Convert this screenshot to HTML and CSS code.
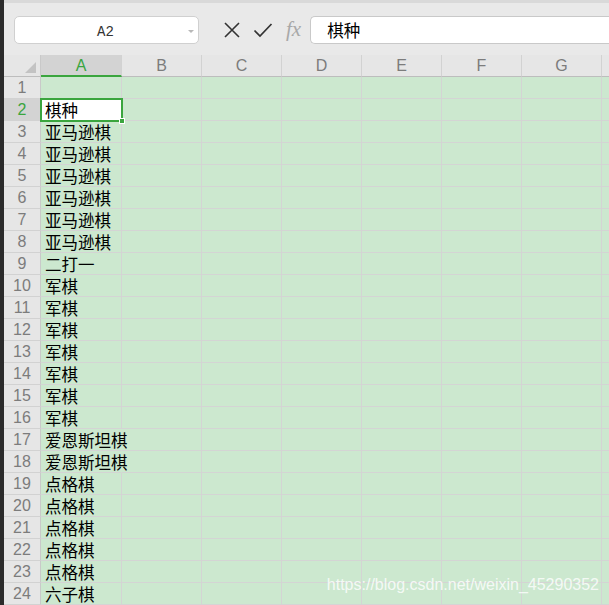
FILE: index.html
```html
<!DOCTYPE html>
<html lang="zh">
<head>
<meta charset="utf-8">
<link rel="stylesheet" href="styles.css">
</head>
<body>
<div class="app">
  <div class="strip"></div>
  <div class="main">
    <div class="toolbar">
      <div class="namebox"><span class="ref">A2</span><span class="caret"></span></div>
      <div class="fbtns">
        <svg class="ico" width="18" height="18" viewBox="0 0 18 18"><path d="M2 2 L16 16 M16 2 L2 16" stroke="#333" stroke-width="1.6" fill="none"/></svg>
        <svg class="ico" width="20" height="18" viewBox="0 0 20 18"><path d="M1.5 9.5 L7 15 L18.5 3" stroke="#333" stroke-width="1.7" fill="none"/></svg>
        <span class="fx">fx</span>
      </div>
      <div class="formula">棋种</div>
    </div>
    <div class="sheet">
      <div class="corner"><span class="tri"></span></div>
      <div class="ch sel">A</div><div class="ch">B</div><div class="ch">C</div><div class="ch">D</div><div class="ch">E</div><div class="ch">F</div><div class="ch">G</div><div class="ch"></div>

      <div class="rh">1</div><div class="c"></div><div class="c"></div><div class="c"></div><div class="c"></div><div class="c"></div><div class="c"></div><div class="c"></div><div class="c"></div>
      <div class="rh sel">2</div><div class="c active">棋种<span class="handle"></span></div><div class="c"></div><div class="c"></div><div class="c"></div><div class="c"></div><div class="c"></div><div class="c"></div><div class="c"></div>
      <div class="rh">3</div><div class="c">亚马逊棋</div><div class="c"></div><div class="c"></div><div class="c"></div><div class="c"></div><div class="c"></div><div class="c"></div><div class="c"></div>
      <div class="rh">4</div><div class="c">亚马逊棋</div><div class="c"></div><div class="c"></div><div class="c"></div><div class="c"></div><div class="c"></div><div class="c"></div><div class="c"></div>
      <div class="rh">5</div><div class="c">亚马逊棋</div><div class="c"></div><div class="c"></div><div class="c"></div><div class="c"></div><div class="c"></div><div class="c"></div><div class="c"></div>
      <div class="rh">6</div><div class="c">亚马逊棋</div><div class="c"></div><div class="c"></div><div class="c"></div><div class="c"></div><div class="c"></div><div class="c"></div><div class="c"></div>
      <div class="rh">7</div><div class="c">亚马逊棋</div><div class="c"></div><div class="c"></div><div class="c"></div><div class="c"></div><div class="c"></div><div class="c"></div><div class="c"></div>
      <div class="rh">8</div><div class="c">亚马逊棋</div><div class="c"></div><div class="c"></div><div class="c"></div><div class="c"></div><div class="c"></div><div class="c"></div><div class="c"></div>
      <div class="rh">9</div><div class="c">二打一</div><div class="c"></div><div class="c"></div><div class="c"></div><div class="c"></div><div class="c"></div><div class="c"></div><div class="c"></div>
      <div class="rh">10</div><div class="c">军棋</div><div class="c"></div><div class="c"></div><div class="c"></div><div class="c"></div><div class="c"></div><div class="c"></div><div class="c"></div>
      <div class="rh">11</div><div class="c">军棋</div><div class="c"></div><div class="c"></div><div class="c"></div><div class="c"></div><div class="c"></div><div class="c"></div><div class="c"></div>
      <div class="rh">12</div><div class="c">军棋</div><div class="c"></div><div class="c"></div><div class="c"></div><div class="c"></div><div class="c"></div><div class="c"></div><div class="c"></div>
      <div class="rh">13</div><div class="c">军棋</div><div class="c"></div><div class="c"></div><div class="c"></div><div class="c"></div><div class="c"></div><div class="c"></div><div class="c"></div>
      <div class="rh">14</div><div class="c">军棋</div><div class="c"></div><div class="c"></div><div class="c"></div><div class="c"></div><div class="c"></div><div class="c"></div><div class="c"></div>
      <div class="rh">15</div><div class="c">军棋</div><div class="c"></div><div class="c"></div><div class="c"></div><div class="c"></div><div class="c"></div><div class="c"></div><div class="c"></div>
      <div class="rh">16</div><div class="c">军棋</div><div class="c"></div><div class="c"></div><div class="c"></div><div class="c"></div><div class="c"></div><div class="c"></div><div class="c"></div>
      <div class="rh">17</div><div class="c spill">爱恩斯坦棋</div><div class="c"></div><div class="c"></div><div class="c"></div><div class="c"></div><div class="c"></div><div class="c"></div><div class="c"></div>
      <div class="rh">18</div><div class="c spill">爱恩斯坦棋</div><div class="c"></div><div class="c"></div><div class="c"></div><div class="c"></div><div class="c"></div><div class="c"></div><div class="c"></div>
      <div class="rh">19</div><div class="c">点格棋</div><div class="c"></div><div class="c"></div><div class="c"></div><div class="c"></div><div class="c"></div><div class="c"></div><div class="c"></div>
      <div class="rh">20</div><div class="c">点格棋</div><div class="c"></div><div class="c"></div><div class="c"></div><div class="c"></div><div class="c"></div><div class="c"></div><div class="c"></div>
      <div class="rh">21</div><div class="c">点格棋</div><div class="c"></div><div class="c"></div><div class="c"></div><div class="c"></div><div class="c"></div><div class="c"></div><div class="c"></div>
      <div class="rh">22</div><div class="c">点格棋</div><div class="c"></div><div class="c"></div><div class="c"></div><div class="c"></div><div class="c"></div><div class="c"></div><div class="c"></div>
      <div class="rh">23</div><div class="c">点格棋</div><div class="c"></div><div class="c"></div><div class="c"></div><div class="c"></div><div class="c"></div><div class="c"></div><div class="c"></div>
      <div class="rh">24</div><div class="c">六子棋</div><div class="c"></div><div class="c"></div><div class="c"></div><div class="c"></div><div class="c"></div><div class="c"></div><div class="c"></div>
    </div>
  </div>
</div>
<div class="watermark">https://blog.csdn.net/weixin_45290352</div>
</body>
</html>
```
FILE: styles.css
```css
* { box-sizing: border-box; }
html, body { margin: 0; padding: 0; }
body {
  width: 609px;
  height: 605px;
  overflow: hidden;
  position: relative;
  background: #e9e9e9;
  font-family: "Liberation Sans", Arial, sans-serif;
}
.app { display: flex; height: 605px; }
.strip { width: 4px; flex: none; background: #2b2b2b; }
.main { flex: 1; min-width: 0; overflow: hidden; }

.toolbar {
  height: 55px;
  display: flex;
  align-items: flex-start;
  padding: 13px 0 0 10px;
  background: #e9e9e9;
  border-top: 3px solid #d9d9d9;
}
.namebox {
  width: 185px;
  height: 28px;
  flex: none;
  background: #fff;
  border: 1px solid #d0d0d0;
  border-radius: 5px;
  display: flex;
  align-items: center;
  justify-content: center;
  position: relative;
}
.ref {
  font-family: "Liberation Mono", monospace;
  font-size: 14px;
  color: #333;
  margin-left: -2px;
  padding-top: 3px;
}
.caret {
  position: absolute;
  right: 4px;
  top: 13px;
  width: 0; height: 0;
  border-left: 3px solid transparent;
  border-right: 3px solid transparent;
  border-top: 3px solid #b8b8b8;
}
.fbtns {
  display: flex;
  align-items: center;
  height: 28px;
  margin-left: 24px;
  gap: 12px;
}
.ico { display: block; }
.fx {
  font-family: "Liberation Serif", serif;
  font-style: italic;
  font-size: 21px;
  color: #a8a8a8;
  margin-left: 1px;
  line-height: 28px;
  margin-top: -2px;
}
.formula {
  margin-left: 9px;
  flex: 1;
  height: 28px;
  background: #fff;
  border: 1px solid #c9c9c9;
  border-right: none;
  border-radius: 5px 0 0 5px;
  font-family: "Noto Sans CJK SC", sans-serif;
  font-size: 16.5px;
  line-height: 26px;
  padding-left: 16px;
  color: #000;
}

.sheet {
  display: grid;
  grid-template-columns: 37px 81px repeat(7, 80px);
  grid-auto-rows: 22px;
  background: #cce8cf;
}
.corner, .ch {
  background: #e6e6e6;
  border-bottom: 1px solid #bdbdbd;
  border-right: 1px solid #d2d2d2;
}
.corner { position: relative; border-right-color: #c9c9c9; }
.tri {
  position: absolute;
  right: 4px;
  bottom: 3px;
  width: 0; height: 0;
  border-left: 11px solid transparent;
  border-bottom: 11px solid #c3c3c3;
}
.ch {
  text-align: center;
  font-size: 16px;
  line-height: 22px;
  color: #7c7c7c;
}
.ch.sel {
  background: #d3d3d3;
  color: #3aa53e;
  border-bottom: 2px solid #3aa53e;
  line-height: 21px;
}
.rh {
  background: #e6e6e6;
  border-right: 1px solid #c9c9c9;
  border-bottom: 1px solid #d2d2d2;
  text-align: center;
  font-size: 16px;
  line-height: 22px;
  color: #7c7c7c;
}
.rh.sel { background: #d3d3d3; color: #3aa53e; }
.c {
  border-right: 1px solid #d4d4d4;
  border-bottom: 1px solid #d4d4d4;
  font-family: "Noto Sans CJK SC", sans-serif;
  font-size: 16.5px;
  line-height: 22px;
  padding-left: 4px;
  white-space: nowrap;
  color: #000;
}
.c.spill { border-right-color: transparent; }
.c.active {
  background: #fff;
  position: relative;
  outline: 2px solid #3aa53e;
  outline-offset: -1px;
  z-index: 1;
}
.handle {
  position: absolute;
  right: -4px;
  bottom: -4px;
  width: 6px;
  height: 6px;
  background: #3aa53e;
  border: 1px solid #fff;
}
.watermark {
  position: absolute;
  right: 10px;
  bottom: 11px;
  font-family: "Liberation Sans", Arial, sans-serif;
  font-size: 16px;
  color: rgba(255,255,255,0.8);
}
```
